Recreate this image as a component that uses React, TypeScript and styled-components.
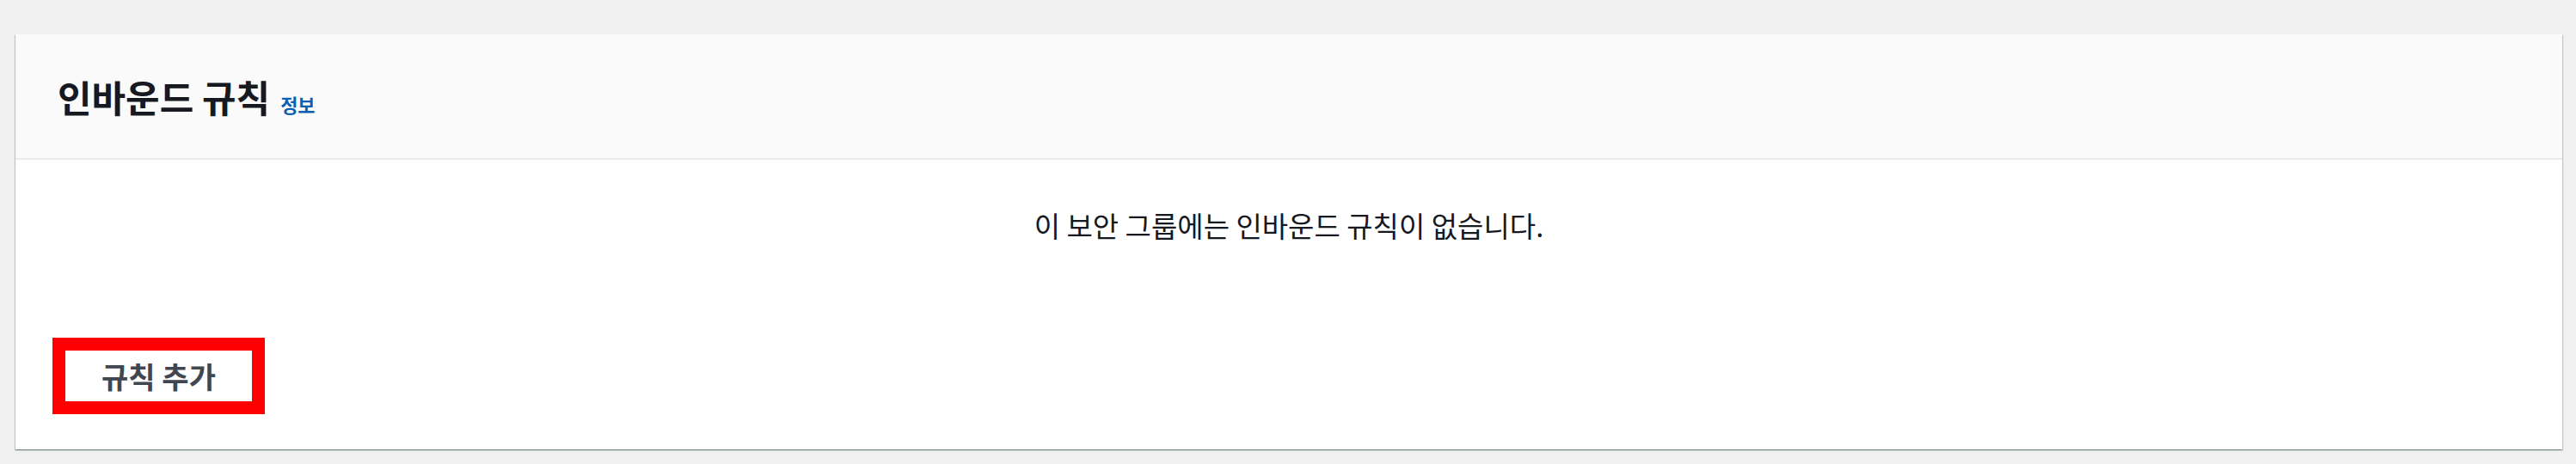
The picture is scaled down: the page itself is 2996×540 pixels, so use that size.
import React from "react";
import styled, { createGlobalStyle } from "styled-components";

const Global = createGlobalStyle`
  html, body {
    margin: 0;
    padding: 0;
    background: #eff0ef;
    font-family: "Noto Sans CJK KR", "Noto Sans", sans-serif;
  }
`;

const Page = styled.div`
  padding: 40px 16px 17px 18px;
`;

const Card = styled.section`
  background: #ffffff;
  box-shadow: 0 1px 1px 0 rgba(0, 28, 36, 0.3), 1px 1px 1px 0 rgba(0, 28, 36, 0.15),
    -1px 1px 1px 0 rgba(0, 28, 36, 0.15);
`;

const Header = styled.header`
  box-sizing: border-box;
  height: 146px;
  background: #fafafa;
  border-bottom: 2px solid #e9ebed;
  display: flex;
  align-items: center;
  padding: 0 49px;
`;

const TitleRow = styled.div`
  display: flex;
  align-items: baseline;
  gap: 12px;
`;

const Title = styled.h2`
  margin: 0;
  font-size: 43px;
  line-height: 56px;
  font-weight: 700;
  color: #16191f;
`;

const InfoLink = styled.a`
  font-size: 22px;
  font-weight: 700;
  color: #0a5fb5;
  text-decoration: none;
`;

const Body = styled.div`
  padding: 56px 0 41px 43px;
  display: flex;
  flex-direction: column;
`;

const Message = styled.p`
  margin: 0 0 111px -43px;
  text-align: center;
  font-size: 33px;
  line-height: 40px;
  font-weight: 400;
  color: #16191f;
`;

const Highlight = styled.div`
  align-self: flex-start;
  border: 15px solid #fe0000;
`;

const Button = styled.button`
  display: block;
  width: 217px;
  height: 59px;
  border: none;
  background: #ffffff;
  font-family: "Noto Sans CJK KR", "Noto Sans", sans-serif;
  font-size: 34px;
  font-weight: 700;
  color: #414750;
  padding: 0;
  cursor: pointer;
`;

export default function App() {
  return (
    <Page>
      <Global />
      <Card>
        <Header>
          <TitleRow>
            <Title>인바운드 규칙</Title>
            <InfoLink href="#">정보</InfoLink>
          </TitleRow>
        </Header>
        <Body>
          <Message>이 보안 그룹에는 인바운드 규칙이 없습니다.</Message>
          <Highlight>
            <Button>규칙 추가</Button>
          </Highlight>
        </Body>
      </Card>
    </Page>
  );
}
